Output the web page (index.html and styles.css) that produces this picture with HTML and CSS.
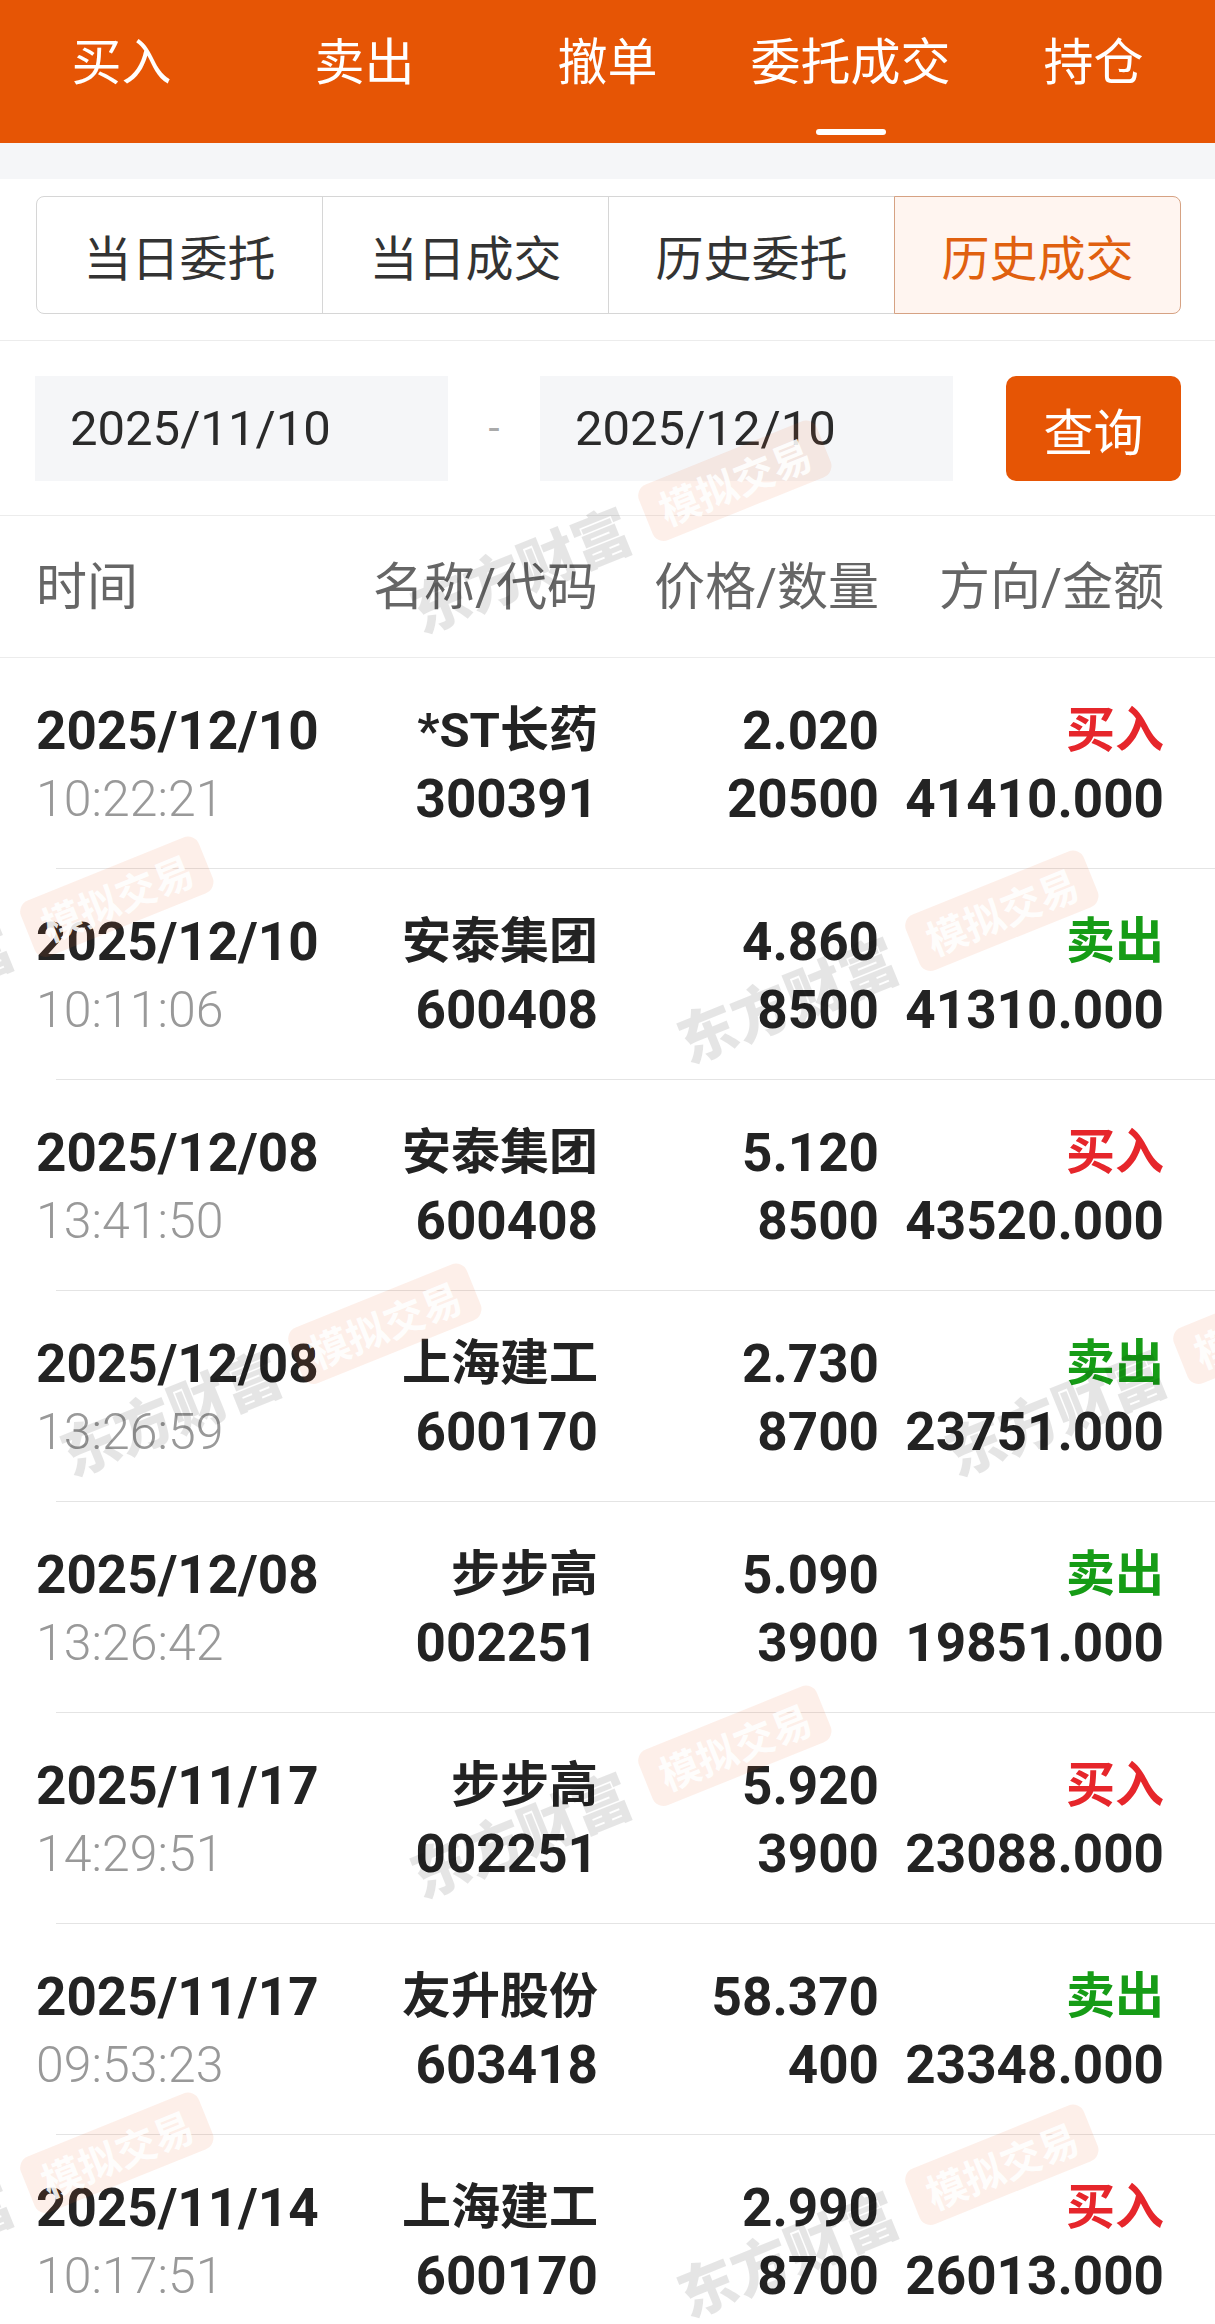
FILE: index.html
```html
<!doctype html>
<html>
    <head>
        <meta name="viewport" content="width=device-width, initial-scale=1">
        <title>委托成交 - 历史成交</title>
        <link rel="stylesheet" href="styles.css">
    </head>
    <body>
        <div class="topbar">
            <div class="tab">买入</div>
            <div class="tab">卖出</div>
            <div class="tab">撤单</div>
            <div class="tab active">委托成交</div>
            <div class="tab">持仓</div>
        </div>
        <div class="band"></div>

        <div class="seg-wrap">
            <div class="segments">
                <div class="seg">当日委托</div>
                <div class="seg">当日成交</div>
                <div class="seg">历史委托</div>
                <div class="seg active">历史成交</div>
            </div>
        </div>

        <div class="query">
            <div class="date-box">2025/11/10</div>
            <span class="dash">-</span>
            <div class="date-box">2025/12/10</div>
            <button type="button" class="btn-query">查询</button>
        </div>

        <div class="list-head">
            <span class="left">时间</span>
            <span>名称/代码</span>
            <span>价格/数量</span>
            <span>方向/金额</span>
        </div>

        <div class="list">
            <div class="row">
                <div class="cell left"><span class="date">2025/12/10</span><span class="time">10:22:21</span></div>
                <div class="cell"><span class="name">*ST长药</span><span class="num">300391</span></div>
                <div class="cell"><span class="num">2.020</span><span class="num">20500</span></div>
                <div class="cell"><span class="dir buy">买入</span><span class="num">41410.000</span></div>
            </div>
            <div class="row">
                <div class="cell left"><span class="date">2025/12/10</span><span class="time">10:11:06</span></div>
                <div class="cell"><span class="name">安泰集团</span><span class="num">600408</span></div>
                <div class="cell"><span class="num">4.860</span><span class="num">8500</span></div>
                <div class="cell"><span class="dir sell">卖出</span><span class="num">41310.000</span></div>
            </div>
            <div class="row">
                <div class="cell left"><span class="date">2025/12/08</span><span class="time">13:41:50</span></div>
                <div class="cell"><span class="name">安泰集团</span><span class="num">600408</span></div>
                <div class="cell"><span class="num">5.120</span><span class="num">8500</span></div>
                <div class="cell"><span class="dir buy">买入</span><span class="num">43520.000</span></div>
            </div>
            <div class="row">
                <div class="cell left"><span class="date">2025/12/08</span><span class="time">13:26:59</span></div>
                <div class="cell"><span class="name">上海建工</span><span class="num">600170</span></div>
                <div class="cell"><span class="num">2.730</span><span class="num">8700</span></div>
                <div class="cell"><span class="dir sell">卖出</span><span class="num">23751.000</span></div>
            </div>
            <div class="row">
                <div class="cell left"><span class="date">2025/12/08</span><span class="time">13:26:42</span></div>
                <div class="cell"><span class="name">步步高</span><span class="num">002251</span></div>
                <div class="cell"><span class="num">5.090</span><span class="num">3900</span></div>
                <div class="cell"><span class="dir sell">卖出</span><span class="num">19851.000</span></div>
            </div>
            <div class="row">
                <div class="cell left"><span class="date">2025/11/17</span><span class="time">14:29:51</span></div>
                <div class="cell"><span class="name">步步高</span><span class="num">002251</span></div>
                <div class="cell"><span class="num">5.920</span><span class="num">3900</span></div>
                <div class="cell"><span class="dir buy">买入</span><span class="num">23088.000</span></div>
            </div>
            <div class="row">
                <div class="cell left"><span class="date">2025/11/17</span><span class="time">09:53:23</span></div>
                <div class="cell"><span class="name">友升股份</span><span class="num">603418</span></div>
                <div class="cell"><span class="num">58.370</span><span class="num">400</span></div>
                <div class="cell"><span class="dir sell">卖出</span><span class="num">23348.000</span></div>
            </div>
            <div class="row">
                <div class="cell left"><span class="date">2025/11/14</span><span class="time">10:17:51</span></div>
                <div class="cell"><span class="name">上海建工</span><span class="num">600170</span></div>
                <div class="cell"><span class="num">2.990</span><span class="num">8700</span></div>
                <div class="cell"><span class="dir buy">买入</span><span class="num">26013.000</span></div>
            </div>
        </div>

        <!-- watermark layer, drawn over the list -->
        <div class="watermarks">
            <div class="wm wm-1"><span class="wm-brand">东方财富</span><span class="wm-tag">模拟交易</span></div>
            <div class="wm wm-2"><span class="wm-brand">东方财富</span><span class="wm-tag">模拟交易</span></div>
            <div class="wm wm-3"><span class="wm-brand">东方财富</span><span class="wm-tag">模拟交易</span></div>
            <div class="wm wm-4"><span class="wm-brand">东方财富</span><span class="wm-tag">模拟交易</span></div>
            <div class="wm wm-5"><span class="wm-brand">东方财富</span><span class="wm-tag">模拟交易</span></div>
            <div class="wm wm-6"><span class="wm-brand">东方财富</span><span class="wm-tag">模拟交易</span></div>
            <div class="wm wm-7"><span class="wm-brand">东方财富</span><span class="wm-tag">模拟交易</span></div>
            <div class="wm wm-8"><span class="wm-brand">东方财富</span><span class="wm-tag">模拟交易</span></div>
        </div>
    </body>
</html>
```

FILE: styles.css
```css
body {
    margin: 0;
    font-family: Roboto, "Noto Sans CJK SC", sans-serif;
    color: #222;
    background-color: #fff;
    position: relative;
}

/* top tabs */
.topbar {
    display: grid;
    grid-template-columns: repeat(5, 1fr);
    height: 143px;
    background-color: #e65505;
}
.tab {
    display: flex;
    flex-direction: column;
    align-items: center;
    padding-top: 37px;
    font-size: 50px;
    line-height: 52px;
    color: #fff;
}
.tab::after {
    content: "";
    display: block;
    width: 70px;
    height: 6px;
    margin-top: 40px;
    border-radius: 3px;
}
.tab.active::after {
    background-color: #fff;
}
.band {
    height: 36px;
    background-color: #f5f6f8;
}

/* segment control */
.seg-wrap {
    padding: 17px 34px 26px 36px;
    border-bottom: 1px solid #ececec;
}
.segments {
    display: flex;
}
.seg {
    flex: 1;
    height: 116px;
    display: flex;
    align-items: center;
    justify-content: center;
    border: 1px solid #d6d6d6;
    margin-left: -1px;
    font-size: 48px;
    color: #333;
}
.seg:first-child {
    margin-left: 0;
    border-radius: 8px 0 0 8px;
}
.seg:last-child {
    border-radius: 0 8px 8px 0;
}
.seg.active {
    background-color: #fff5f0;
    border-color: #d6a283;
    color: #e0600f;
    z-index: 1;
    position: relative;
}

/* date query */
.query {
    display: flex;
    align-items: center;
    padding: 35px 34px 34px 35px;
    border-bottom: 1px solid #ececec;
}
.date-box {
    width: 378px;
    height: 105px;
    padding-left: 35px;
    background-color: #f5f6f8;
    font-size: 49px;
    line-height: 105px;
    color: #2a2a2a;
}
.dash {
    width: 92px;
    text-align: center;
    font-size: 40px;
    color: #aaa;
}
.btn-query {
    margin-left: auto;
    width: 175px;
    height: 105px;
    border: none;
    border-radius: 10px;
    background-color: #e65505;
    color: #fff;
    font-family: inherit;
    font-size: 50px;
    padding: 0;
}

/* list */
.list-head,
.row {
    display: grid;
    grid-template-columns: 300px 262px 281px 1fr;
    padding-left: 36px;
    padding-right: 51px;
    text-align: right;
}
.list-head {
    padding-top: 46px;
    padding-bottom: 43px;
    border-bottom: 1px solid #ececec;
    font-size: 51px;
    line-height: 52px;
    color: #666;
}
.left {
    text-align: left;
}
.row {
    padding-top: 39px;
    padding-bottom: 36px;
    background: linear-gradient(#e4e4e4, #e4e4e4) right bottom / calc(100% - 56px) 1px no-repeat;
}
.cell {
    display: flex;
    flex-direction: column;
}
.cell span {
    height: 68px;
    line-height: 68px;
    white-space: nowrap;
}
.date, .num {
    font-size: 53px;
    font-weight: 700;
    color: #232323;
}
.time {
    font-size: 50px;
    font-weight: 300;
    color: #999;
}
.name {
    font-size: 49px;
    font-weight: 700;
    color: #232323;
}
.dir {
    font-size: 49px;
    font-weight: 700;
}
.buy {
    color: #e6262b;
}
.sell {
    color: #169c16;
}

/* watermark overlay */
.watermarks {
    position: absolute;
    top: 0;
    left: 0;
    width: 100%;
    height: 2324px;
    overflow: hidden;
    pointer-events: none;
}
.wm {
    position: absolute;
    display: flex;
    align-items: center;
    gap: 20px;
    white-space: nowrap;
    transform: translate(-50%, -50%) rotate(-22deg);
}
.wm-brand {
    font-family: "Noto Sans CJK SC", sans-serif;
    font-size: 58px;
    font-weight: 900;
    color: rgba(0, 0, 0, 0.1);
}
.wm-tag {
    font-family: "Noto Sans CJK SC", sans-serif;
    font-size: 40px;
    font-weight: 700;
    line-height: 56px;
    padding: 2px 16px;
    border-radius: 12px;
    background-color: rgba(236, 96, 40, 0.1);
    color: rgba(255, 255, 255, 0.9);
}
.wm-1 { left: 618px; top: 528px; }
.wm-2 { left: 0; top: 944px; }
.wm-3 { left: 885px; top: 958px; }
.wm-4 { left: 268px; top: 1371px; }
.wm-5 { left: 1153px; top: 1371px; }
.wm-6 { left: 618px; top: 1793px; }
.wm-7 { left: 0; top: 2200px; }
.wm-8 { left: 885px; top: 2212px; }
```
